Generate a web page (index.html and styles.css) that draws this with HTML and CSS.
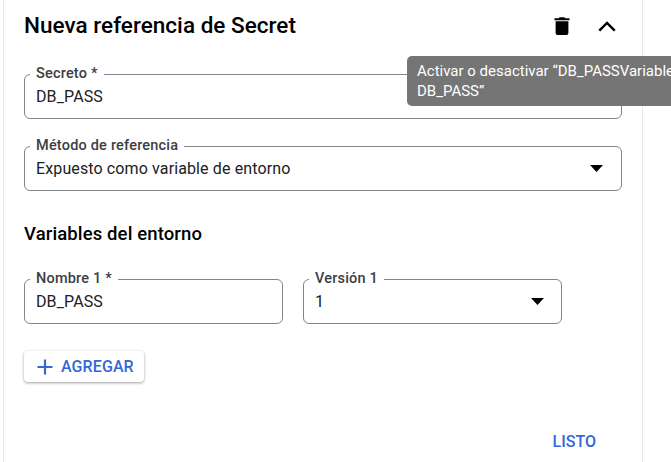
FILE: index.html
```html
<!DOCTYPE html>
<html lang="es">
<head>
<meta charset="utf-8">
<title>Nueva referencia de Secret</title>
<link rel="stylesheet" href="styles.css">
</head>
<body>
<section class="card">
  <header class="head">
    <h2 class="title"><span>Nueva referencia de Secret</span></h2>
    <svg class="trash" width="16" height="18" viewBox="0 0 16 18"><path d="M0.5 1.2H4.8L5.6 0.3H10.4L11.2 1.2H15.5V3.2H0.5ZM1.6 4.2H14.4V16Q14.4 18 12.4 18H3.6Q1.6 18 1.6 16Z"/></svg>
    <svg class="chevron" width="18" height="11" viewBox="0 0 18 11"><path d="M1.3 9.6L9 1.9L16.7 9.6" fill="none" stroke="#000" stroke-width="2.5"/></svg>
    <div class="tooltip">Activar o desactivar “DB_PASSVariable<br>DB_PASS”</div>
  </header>
  <div class="field">
    <label class="label"><span>Secreto *</span></label>
    <span class="value">DB_PASS</span>
  </div>
  <div class="field method">
    <label class="label"><span>Método de referencia</span></label>
    <span class="value">Expuesto como variable de entorno</span>
    <svg class="arrow" width="13" height="7" viewBox="0 0 13 7"><path d="M0 0H13L6.5 7Z"/></svg>
  </div>
  <h3 class="subtitle"><span>Variables del entorno</span></h3>
  <div class="row">
    <div class="field">
      <label class="label"><span>Nombre 1 *</span></label>
      <span class="value">DB_PASS</span>
    </div>
    <div class="field">
      <label class="label"><span>Versión 1</span></label>
      <span class="value">1</span>
      <svg class="arrow" width="13" height="7" viewBox="0 0 13 7"><path d="M0 0H13L6.5 7Z"/></svg>
    </div>
  </div>
  <button class="add"><svg width="16" height="16" viewBox="0 0 16 16"><path d="M8 0.5V15.5M0.5 8H15.5" stroke="#3367d6" stroke-width="2.2"/></svg><span>AGREGAR</span></button>
  <footer class="foot"><button class="done">LISTO</button></footer>
</section>
</body>
</html>
```
FILE: styles.css
```css
* { box-sizing: border-box; }
body {
  margin: 0;
  background: #fff;
  font-family: Roboto, sans-serif;
  color: #000;
  overflow: hidden;
}
.card {
  width: 640px;
  height: 462px;
  margin-left: 3px;
  padding: 0 20px;
  border: solid #e8e8e8;
  border-width: 0 1px;
}
.head {
  position: relative;
  display: flex;
  height: 74px;
}
.title {
  flex: 1;
  margin: 11px 0 0;
  font-size: 22.5px;
  line-height: 28px;
  font-weight: 500;
  letter-spacing: .03px;
}
.trash { margin: 17px 28px 0 0; }
.chevron { margin: 21px 6px 0 0; }
.tooltip {
  position: absolute;
  z-index: 2;
  left: 383px;
  top: 56px;
  width: 280px;
  height: 50px;
  padding: 5px 10px;
  border-radius: 5px;
  background: #757575;
  color: #fff;
  font-size: 15px;
  line-height: 20px;
  white-space: nowrap;
}
.field {
  position: relative;
  display: flex;
  align-items: center;
  justify-content: space-between;
  width: 598px;
  height: 45px;
  padding: 0 18px 0 11px;
  border: 1px solid #80868b;
  border-radius: 6px;
}
.label {
  position: absolute;
  left: 5px;
  top: -11px;
  padding: 0 6px;
  background: #fff;
  color: #3c4043;
  font-size: 14.5px;
  line-height: 20px;
  font-weight: 500;
  letter-spacing: .2px;
  white-space: nowrap;
}
.value {
  color: #202124;
  font-size: 16px;
  line-height: 20px;
  letter-spacing: .12px;
}
.method { margin-top: 27px; }
.subtitle {
  margin: 31px 0 33px;
  font-size: 18.5px;
  line-height: 24px;
  font-weight: 500;
  letter-spacing: .12px;
}
.row { display: flex; gap: 20px; }
.row .field { width: 259px; }
.row .field .arrow { margin-right: -1px; }
.add {
  display: flex;
  align-items: center;
  gap: 8px;
  width: 120px;
  height: 31px;
  margin-top: 27px;
  padding: 0 0 0 13px;
  border: 0;
  border-radius: 4px;
  background: #fff;
  box-shadow: 0 1px 3px rgba(0, 0, 0, .38);
  color: #3367d6;
  font: 500 16px/20px Roboto, sans-serif;
  letter-spacing: .1px;
}
.foot {
  display: flex;
  justify-content: flex-end;
  margin-top: 50px;
  padding-right: 26px;
}
.done {
  padding: 0;
  border: 0;
  background: none;
  color: #3367d6;
  font: 500 16px/20px Roboto, sans-serif;
}
```
